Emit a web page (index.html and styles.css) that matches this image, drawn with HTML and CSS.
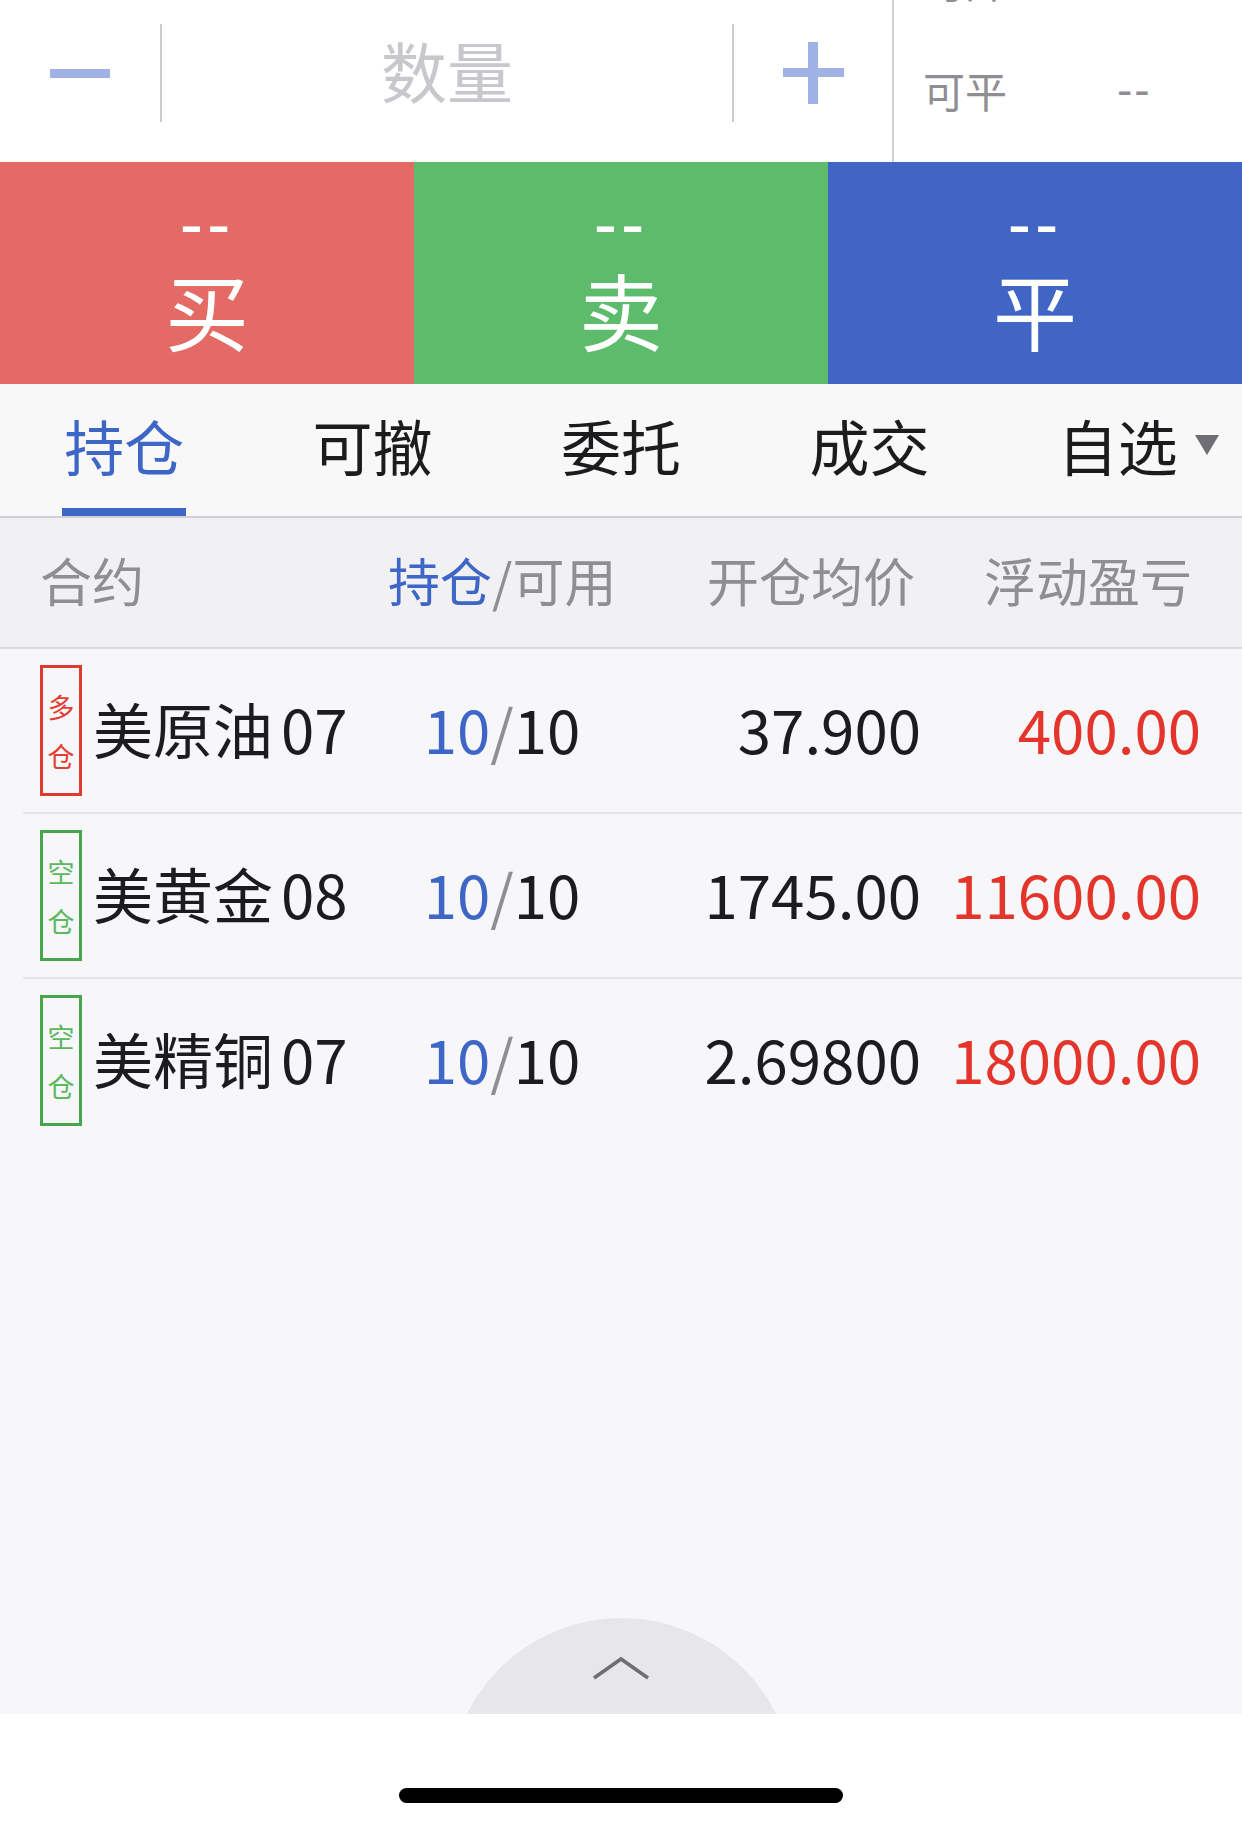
FILE: index.html
```html
<!DOCTYPE html>
<html>
<head>
    <meta charset="utf-8">
    <link rel="stylesheet" href="styles.css">
</head>
<body>
    <div class="screen">
        <div class="order-bar">
            <div class="stepper">
                <div class="step">
                    <svg width="60" height="9" viewBox="0 0 60 9"><rect width="60" height="9" fill="#9fb2e3"/></svg>
                </div>
                <i class="sep"></i>
                <div class="qty">数量</div>
                <i class="sep"></i>
                <div class="step">
                    <svg width="61" height="62" viewBox="0 0 61 62"><rect x="0" y="26" width="61" height="9" fill="#9fb2e3"/><rect x="25" y="0" width="10" height="62" fill="#9fb2e3"/></svg>
                </div>
            </div>
            <div class="avail">
                <div class="avail-row"><span class="avail-label">可开</span><span>--</span></div>
                <div class="avail-row"><span class="avail-label">可平</span><span>--</span></div>
            </div>
        </div>

        <div class="actions">
            <div class="action buy"><span class="price">--</span><span class="verb">买</span></div>
            <div class="action sell"><span class="price">--</span><span class="verb">卖</span></div>
            <div class="action close"><span class="price">--</span><span class="verb">平</span></div>
        </div>

        <div class="tabs">
            <div class="tab active"><span class="tab-label">持仓</span></div>
            <div class="tab"><span class="tab-label">可撤</span></div>
            <div class="tab"><span class="tab-label">委托</span></div>
            <div class="tab"><span class="tab-label">成交</span></div>
            <div class="tab"><span class="tab-label">自选<b class="caret"></b></span></div>
        </div>

        <div class="list">
            <div class="list-head">
                <div class="col-name">合约</div>
                <div class="col-qty"><span class="blue">持仓</span>/可用</div>
                <div class="col-price">开仓均价</div>
                <div class="col-pnl">浮动盈亏</div>
            </div>

            <div class="row">
                <div class="col-name">
                    <span class="badge long">多<br>仓</span>
                    <span class="name">美原油<span class="month">07</span></span>
                </div>
                <div class="col-qty"><span class="blue">10</span><span class="slash">/</span>10</div>
                <div class="col-price">37.900</div>
                <div class="col-pnl up">400.00</div>
            </div>
            <div class="row">
                <div class="col-name">
                    <span class="badge short">空<br>仓</span>
                    <span class="name">美黄金<span class="month">08</span></span>
                </div>
                <div class="col-qty"><span class="blue">10</span><span class="slash">/</span>10</div>
                <div class="col-price">1745.00</div>
                <div class="col-pnl up">11600.00</div>
            </div>
            <div class="row last">
                <div class="col-name">
                    <span class="badge short">空<br>仓</span>
                    <span class="name">美精铜<span class="month">07</span></span>
                </div>
                <div class="col-qty"><span class="blue">10</span><span class="slash">/</span>10</div>
                <div class="col-price">2.69800</div>
                <div class="col-pnl up">18000.00</div>
            </div>

            <div class="handle">
                <div class="knob">
                    <svg width="60" height="26" viewBox="0 0 60 26"><polyline points="3,23 30,4 57,23" fill="none" stroke="#6e6e73" stroke-width="3.5"/></svg>
                </div>
            </div>
        </div>

        <div class="home-area"><span class="home-indicator"></span></div>
    </div>
</body>
</html>
```

FILE: styles.css
```css
html, body {
    margin: 0;
    padding: 0;
    background-color: #fff;
}

body {
    font-family: "Noto Sans CJK SC", "Noto Sans", sans-serif;
    color: #1c1c1e;
}

.screen {
    width: 1242px;
    height: 1827px;
    display: flex;
    flex-direction: column;
    overflow: hidden;
}

/* quantity stepper + available panel */
.order-bar {
    height: 162px;
    display: flex;
    background-color: #fff;
}

.stepper {
    width: 892px;
    display: flex;
    align-items: center;
    padding-bottom: 16px;
    box-sizing: border-box;
}

.step {
    width: 160px;
    display: flex;
    justify-content: center;
    align-items: center;
}

.step:last-child {
    width: 158px;
}

.sep {
    width: 2px;
    height: 98px;
    background-color: #cbcbd0;
}

.qty {
    flex: 1;
    text-align: center;
    font-size: 66px;
    line-height: 80px;
    padding-bottom: 9px;
    color: #c7c7cc;
}

.avail {
    flex: 1;
    border-left: 2px solid #d1d1d6;
    padding-left: 29px;
    overflow: hidden;
    display: flex;
    flex-direction: column;
    gap: 54px;
    font-size: 42px;
    line-height: 56px;
    color: #8e8e93;
}

.avail-row {
    display: flex;
}

.avail-row:first-child {
    margin-top: -48px;
}

.avail-label {
    width: 194px;
}

.avail-row span:last-child {
    font-family: "Liberation Sans", sans-serif;
    font-size: 46px;
    letter-spacing: 2px;
}

/* buy / sell / close buttons */
.actions {
    height: 222px;
    display: flex;
}

.action {
    flex: 1;
    display: flex;
    flex-direction: column;
    align-items: center;
    padding-top: 23px;
    color: #fff;
}

.action .price {
    font-size: 70px;
    line-height: 78px;
    letter-spacing: 4px;
    font-family: "Liberation Sans", sans-serif;
}

.action .verb {
    font-size: 84px;
    line-height: 92px;
}

.buy { background-color: #e46a65; }
.sell { background-color: #5dbb6c; }
.close { background-color: #4165c4; }

/* tabs */
.tabs {
    height: 132px;
    display: flex;
    background-color: #f8f8f8;
    border-bottom: 2px solid #cfcfd4;
}

.tab {
    flex: 1;
    display: flex;
    justify-content: center;
    padding-top: 32px;
    font-size: 60px;
    line-height: 58px;
}

.tab-label {
    display: flex;
    align-items: center;
    height: 58px;
    padding: 0 2px 34px;
    border-bottom: 8px solid transparent;
}

.tab.active .tab-label {
    color: #3e66c7;
    border-bottom-color: #3e66c7;
}

.caret {
    width: 0;
    height: 0;
    border-left: 12px solid transparent;
    border-right: 12px solid transparent;
    border-top: 20px solid #6e6e73;
    margin-left: 17px;
    margin-right: -41px;
}

/* position list */
.list {
    flex: 1;
    display: flex;
    flex-direction: column;
    background-color: #f7f7f9;
}

.list-head,
.row {
    display: grid;
    grid-template-columns: 388px 228px 305px 280px;
    align-items: center;
    white-space: nowrap;
}

.list-head {
    height: 129px;
    background-color: #f1f1f3;
    border-bottom: 2px solid #d9d9de;
    font-size: 52px;
    line-height: 70px;
    color: #8e8e93;
}

.list-head > div {
    padding-bottom: 6px;
}

.list-head .col-name {
    padding-left: 40px;
}

.col-qty {
    text-align: center;
}

.col-price,
.col-pnl {
    text-align: right;
}

.list-head .col-price {
    padding-right: 6px;
}

.list-head .col-pnl {
    padding-right: 9px;
}

.blue {
    color: #3e66c7;
}

.row {
    height: 163px;
    margin-left: 23px;
    grid-template-columns: 365px 228px 305px 280px;
    border-bottom: 2px solid #e4e4ea;
    font-size: 60px;
    line-height: 80px;
}

.row.last {
    border-bottom-color: transparent;
}

.row .col-qty,
.row .col-price,
.row .col-pnl,
.name {
    padding-bottom: 6px;
}

.row .col-name {
    display: flex;
    align-items: center;
}

.badge {
    box-sizing: border-box;
    width: 42px;
    height: 131px;
    margin-left: 17px;
    border: 3px solid;
    display: flex;
    align-items: center;
    justify-content: center;
    text-align: center;
    font-size: 27px;
    line-height: 49px;
}

.badge.long {
    color: #e23e33;
    border-color: #df3a2f;
}

.badge.short {
    color: #5cb85f;
    border-color: #47a64c;
}

.name {
    margin-left: 11px;
}

.month {
    margin-left: 8px;
}

.slash {
    color: #8e8e93;
}

.up {
    color: #e3352b;
}

/* pull-up handle */
.handle {
    margin-top: auto;
    height: 96px;
    overflow: hidden;
    display: flex;
    justify-content: center;
}

.knob {
    flex: none;
    width: 345px;
    height: 345px;
    border-radius: 50%;
    background-color: #e7e7ea;
    display: flex;
    justify-content: center;
    align-items: flex-start;
    padding-top: 37px;
    box-sizing: border-box;
}

.home-area {
    height: 113px;
    background-color: #fff;
    display: flex;
    justify-content: center;
    padding-top: 74px;
    box-sizing: border-box;
}

.home-indicator {
    width: 444px;
    height: 15px;
    border-radius: 8px;
    background-color: #000;
}
```
